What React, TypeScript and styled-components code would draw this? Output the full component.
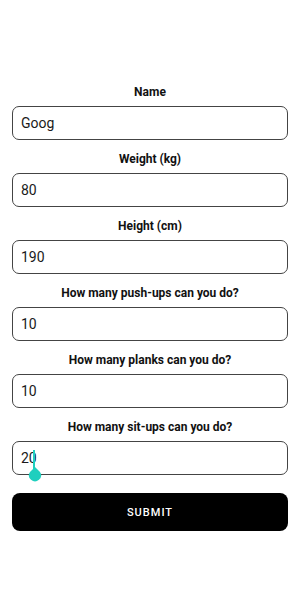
import styled, { createGlobalStyle } from "styled-components";

const GlobalStyle = createGlobalStyle`
  html, body {
    margin: 0;
    padding: 0;
    background: #fff;
    font-family: Roboto, "Liberation Sans", sans-serif;
  }
  * { box-sizing: border-box; }
`;

const Form = styled.form`
  display: flex;
  flex-direction: column;
  gap: 11px;
  padding: 84px 12px 0;
`;

const Field = styled.div`
  display: flex;
  flex-direction: column;
  gap: 6px;
`;

const Label = styled.label`
  display: block;
  height: 16px;
  line-height: 16px;
  text-align: center;
  font-size: 12px;
  font-weight: 700;
  color: #111;
`;

const InputWrap = styled.div`
  position: relative;
`;

const Input = styled.input`
  display: block;
  width: 100%;
  height: 34px;
  padding: 0 8px;
  border: 1px solid #444;
  border-radius: 7px;
  background: #fff;
  font-family: Roboto, "Liberation Sans", sans-serif;
  font-size: 14px;
  color: #1a1a1a;
  outline: none;
`;

const Caret = styled.div`
  position: absolute;
  left: 21px;
  top: 9px;
  width: 2px;
  height: 19px;
  background: #1fcfbe;
`;

const Handle = styled.svg`
  position: absolute;
  left: 16px;
  top: 26px;
  width: 14px;
  height: 15px;
`;

const SubmitButton = styled.button`
  margin-top: 7px;
  height: 38px;
  border: none;
  border-radius: 8px;
  background: #000;
  color: #fff;
  font-family: Roboto, "Liberation Sans", sans-serif;
  font-size: 11px;
  font-weight: 500;
  letter-spacing: 1px;
  text-transform: uppercase;
`;

const fields = [
  { label: "Name", value: "Goog" },
  { label: "Weight (kg)", value: "80" },
  { label: "Height (cm)", value: "190" },
  { label: "How many push-ups can you do?", value: "10" },
  { label: "How many planks can you do?", value: "10" },
  { label: "How many sit-ups can you do?", value: "20", focused: true },
];

export default function App() {
  return (
    <>
      <GlobalStyle />
      <Form onSubmit={(e) => e.preventDefault()}>
        {fields.map((f) => (
          <Field key={f.label}>
            <Label>{f.label}</Label>
            <InputWrap>
              <Input defaultValue={f.value} />
              {f.focused && (
                <>
                  <Caret />
                  <Handle viewBox="0 0 14 15">
                    <path d="M7 0 L12 5 A6 6 0 1 1 2 5 Z" fill="#1fcfbe" />
                  </Handle>
                </>
              )}
            </InputWrap>
          </Field>
        ))}
        <SubmitButton type="submit">Submit</SubmitButton>
      </Form>
    </>
  );
}
